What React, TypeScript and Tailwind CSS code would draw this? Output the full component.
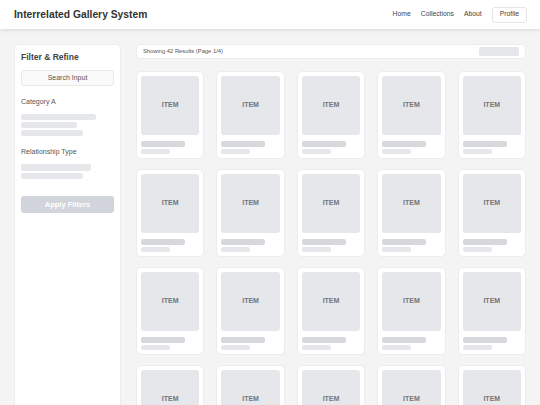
import React from 'react'

const items = Array.from({ length: 20 }, (_, i) => i)

function Card() {
    return (
        <div className="bg-white border border-[#ececec] rounded-[5px] p-[4px] flex flex-col">
            <div className="h-[59px] bg-[#e5e7eb] rounded-[3px] flex items-center justify-center text-[7px] font-bold text-[#71757c]">
                ITEM
            </div>
            <div className="mt-[6px] h-[6px] w-[44px] bg-[#d6d8dc] rounded-[2px]" />
            <div className="mt-[2px] h-[5px] w-[29px] bg-[#e5e7eb] rounded-[2px]" />
        </div>
    )
}

export default function App() {
    return (
        <div className="min-h-screen bg-[#f4f4f4] font-['Liberation_Sans',Arial,sans-serif] text-[#333]">
            {/* Header */}
            <header className="h-[29px] bg-white shadow-[0_1px_4px_rgba(0,0,0,0.12)] flex items-center justify-between pl-[14px] pr-[13px]">
                <h1 className="text-[10.3px] font-bold text-[#333]">Interrelated Gallery System</h1>
                <nav className="flex items-center">
                    <a className="text-[6.8px] text-[#444]">Home</a>
                    <a className="text-[6.8px] text-[#444] ml-[10px]">Collections</a>
                    <a className="text-[6.8px] text-[#444] ml-[10px]">About</a>
                    <button className="ml-[10px] h-[16px] px-[7px] text-[6.8px] text-[#444] bg-white border border-[#e5e5e5] rounded-[3px]">
                        Profile
                    </button>
                </nav>
            </header>

            <div className="flex items-stretch px-[14px] pt-[15px] gap-[15px]">
                {/* Sidebar */}
                <aside className="w-[107px] shrink-0 bg-white border border-[#ececec] rounded-[4px] px-[6px] pt-[6px]">
                    <h2 className="text-[8.5px] font-bold leading-[12px] text-[#444]">Filter &amp; Refine</h2>
                    <div className="mt-[7px] h-[16px] border border-[#e8e8e8] bg-[#fafafa] rounded-[3px] flex items-center justify-center text-[7px] text-[#555]">
                        Search Input
                    </div>
                    <div className="mt-[11px] text-[7px] leading-[10px] text-[#555]">Category A</div>
                    <div className="mt-[7px] flex flex-col gap-[2px]">
                        <div className="h-[6px] w-[75px] bg-[#e5e7eb] rounded-[2px]" />
                        <div className="h-[6px] w-[56px] bg-[#e5e7eb] rounded-[2px]" />
                        <div className="h-[6px] w-[62px] bg-[#e5e7eb] rounded-[2px]" />
                    </div>
                    <div className="mt-[11px] text-[7px] leading-[10px] text-[#555]">Relationship Type</div>
                    <div className="mt-[7px] flex flex-col gap-[2px]">
                        <div className="h-[7px] w-[70px] bg-[#e5e7eb] rounded-[2px]" />
                        <div className="h-[6px] w-[62px] bg-[#e5e7eb] rounded-[2px]" />
                    </div>
                    <button className="mt-[17px] w-full h-[17px] bg-[#d1d5db] rounded-[3px] text-[7.5px] font-bold text-white">
                        Apply Filters
                    </button>
                </aside>

                {/* Main */}
                <main className="flex-1 pb-[12px]">
                    <div className="h-[15px] bg-white border border-[#ececec] rounded-[4px] flex items-center justify-between pl-[6px] pr-[6px]">
                        <span className="text-[5.8px] text-[#555]">Showing 42 Results (Page 1/4)</span>
                        <div className="h-[9px] w-[40px] bg-[#e5e7eb] rounded-[2px]" />
                    </div>
                    <div className="mt-[12px] grid grid-cols-5 gap-x-[12px] gap-y-[10px]">
                        {items.map((i) => (
                            <Card key={i} />
                        ))}
                    </div>
                </main>
            </div>
        </div>
    )
}
